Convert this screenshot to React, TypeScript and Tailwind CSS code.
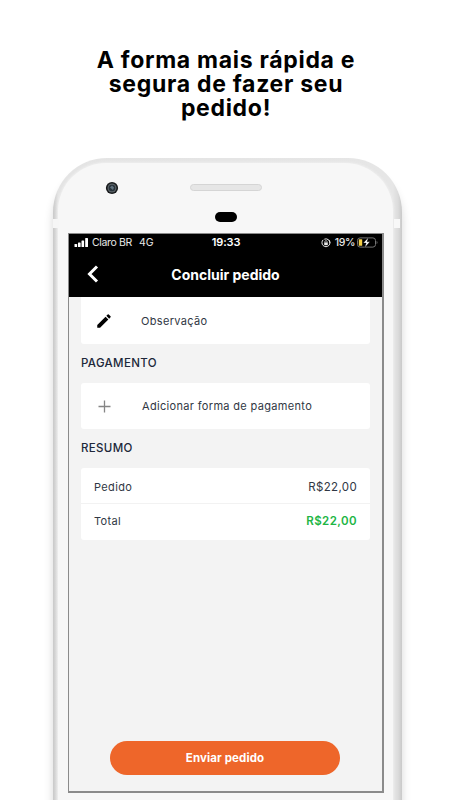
import type { ReactNode } from 'react';

interface SummaryRow {
  label: string;
  value: string;
  highlight?: boolean;
}

const summary: SummaryRow[] = [
  { label: 'Pedido', value: 'R$22,00' },
  { label: 'Total', value: 'R$22,00', highlight: true },
];

function StatusBar() {
  return (
    <div className="flex h-[17px] items-center pl-[5px] pr-[4px] text-[10.5px] leading-none text-[#e8e8e8]">
      <div className="flex flex-1 items-center">
        <svg width="15" height="9" viewBox="0 0 15 9" fill="#fff">
          <rect x="0.5" y="6" width="2.6" height="3" rx="0.6" />
          <rect x="4" y="4.5" width="2.6" height="4.5" rx="0.6" />
          <rect x="7.5" y="2.5" width="2.6" height="6.5" rx="0.6" />
          <rect x="11.2" y="0" width="2.8" height="9" rx="0.6" />
        </svg>
        <span className="ml-[3px] pt-px tracking-[-0.35px]">Claro BR</span>
        <span className="ml-[7px] pt-px">4G</span>
      </div>
      <span className="text-[11px] font-semibold tracking-[-0.1px] text-white">19:33</span>
      <div className="flex flex-1 items-center justify-end">
        <svg width="10" height="10" viewBox="0 0 10 10" fill="none" stroke="#e8e8e8">
          <path d="M2.2 1.8A4 4 0 1 0 7.6 1.7M3.3 1.2A4 4 0 0 1 8.9 5" strokeWidth="1" />
          <rect x="3.2" y="4.4" width="3.6" height="2.8" fill="#e8e8e8" stroke="none" />
          <path d="M3.9 4.5V3.7a1.1 1.1 0 0 1 2.2 0v0.8" strokeWidth="0.7" />
        </svg>
        <span className="ml-[4px] pt-px font-medium tracking-[-0.4px]">19%</span>
        <svg className="ml-[2px]" width="21" height="11" viewBox="0 0 21 11" fill="none">
          <rect x="0.5" y="0.9" width="18" height="9.2" rx="2.6" stroke="#747474" />
          <path d="M19.6 4v3c1.2-.5 1.2-2.5 0-3Z" fill="#747474" />
          <rect x="1.8" y="2.2" width="3.4" height="6.6" rx="0.6" fill="#f5cf45" />
          <path d="M11.4 0.5 6.3 6h2.9L7.8 10.6l5.1-5.8H10Z" fill="#fff" stroke="#000" strokeWidth="0.3" />
        </svg>
      </div>
    </div>
  );
}

function SectionTitle({ children }: { children: ReactNode }) {
  return (
    <h2 className="flex h-[39px] items-center pt-px text-[11.5px] font-medium tracking-[0.35px] text-[#202739]">
      {children}
    </h2>
  );
}

export default function App() {
  return (
    <div className="flex h-[800px] w-[450px] flex-col overflow-hidden bg-white font-['Inter','Liberation_Sans',sans-serif]">
      <h1 className="mt-[48px] ml-[2px] h-[110px] shrink-0 text-center text-[23px] leading-[24px] font-bold tracking-[0.7px] text-black">
        A forma mais rápida e
        <br />
        segura de fazer seu
        <br />
        pedido!
      </h1>

      <div className="ml-[53px] h-[720px] w-[349px] shrink-0 rounded-t-[54px] bg-[linear-gradient(90deg,#c9c9c9_0px,#e4e4e4_5px,#e6e6e6_340px,#dcdcdc_345px,#c9c9c9_349px)] pt-[5px] pr-[9px] pl-[5px] shadow-[0_10px_10px_rgba(0,0,0,0.16)]">
        <div className="relative h-full w-full rounded-t-[48px] bg-[#f7f7f7] pl-[10px] shadow-[0_0_2px_1px_#eeeeee]">
          <div className="absolute top-[56px] -left-[5px] h-[9px] w-[6px] bg-[#f6f6f6]" />
          <div className="absolute top-[56px] -right-[7px] h-[9px] w-[6px] bg-[#f8f8f8]" />

          <div className="flex h-[49px] items-center pl-[37px]">
            <svg width="14" height="14" viewBox="0 0 14 14">
              <circle cx="7" cy="7" r="6.1" fill="#17191b" />
              <circle cx="7" cy="7" r="4.5" fill="#5b6468" />
              <circle cx="7" cy="7" r="3.3" fill="#28323a" />
              <path d="M5 6.5 7 4.5l2 2-1 2.5" fill="#60727e" />
            </svg>
            <div className="ml-[71px] h-[7px] w-[72px] rounded-full border border-[#d5d5d5] bg-[#e6e6e6]" />
          </div>
          <div className="ml-[147px] h-[10px] w-[22px] rounded-full bg-black" />

          <div className="mt-[11px] flex h-[560px] w-[316px] flex-col border border-r-2 border-b-2 border-[#8b8b8b] bg-[#f3f3f3]">
            <header className="h-[63px] shrink-0 bg-black">
              <StatusBar />
              <div className="flex h-[46px] items-center text-white">
                <svg className="ml-[16px]" width="16" height="18" viewBox="0 0 16 18" fill="none" stroke="currentColor" strokeWidth="3">
                  <path d="M12 1.5 4.500 9l7.500 7.500" />
                </svg>
                <h2 className="mr-[32px] flex-1 text-center text-[14px] font-bold">Concluir pedido</h2>
              </div>
            </header>

            <main className="flex flex-1 flex-col px-[12px]">
              <div className="flex h-[47px] items-center rounded-b-[3px] bg-white pl-[14px]">
                <svg width="18" height="18" viewBox="0 0 24 24" fill="#000">
                  <path d="M3 17.25V21h3.75L17.81 9.94l-3.75-3.75L3 17.25ZM20.71 7.04a1 1 0 0 0 0-1.41l-2.34-2.34a1 1 0 0 0-1.41 0l-1.83 1.83 3.75 3.75 1.83-1.83Z" />
                </svg>
                <span className="ml-[28px] pt-px text-[11px] tracking-[0.33px] text-[#303744]">Observação</span>
              </div>

              <SectionTitle>PAGAMENTO</SectionTitle>

              <div className="flex h-[46px] items-center rounded-[3px] bg-white pl-[17px]">
                <svg width="13" height="13" viewBox="0 0 13 13" stroke="#858585" strokeWidth="1.3">
                  <path d="M6.5 0.5v12M0.5 6.5h12" />
                </svg>
                <span className="ml-[31px] pt-px text-[11px] tracking-[0.33px] text-[#303744]">
                  Adicionar forma de pagamento
                </span>
              </div>

              <SectionTitle>RESUMO</SectionTitle>

              <div className="h-[72px] divide-y divide-[#f2f2f2] rounded-[3px] bg-white">
                {summary.map((row) => (
                  <div key={row.label} className="flex h-[36px] items-center justify-between px-[13px] text-[11.5px] tracking-[0.35px] text-[#303744] first:pt-[4px] last:pb-px">
                    <span className="text-[11px]">{row.label}</span>
                    <span className={row.highlight ? 'pt-px font-semibold tracking-[0.42px] text-[#20b544]' : ''}>{row.value}</span>
                  </div>
                ))}
              </div>

              <button className="mt-auto mb-[16px] ml-[29px] h-[34px] w-[230px] rounded-full bg-[#ee662a] pt-px text-[11.5px] font-bold tracking-[0.12px] text-white">
                Enviar pedido
              </button>
            </main>
          </div>
        </div>
      </div>
    </div>
  );
}
